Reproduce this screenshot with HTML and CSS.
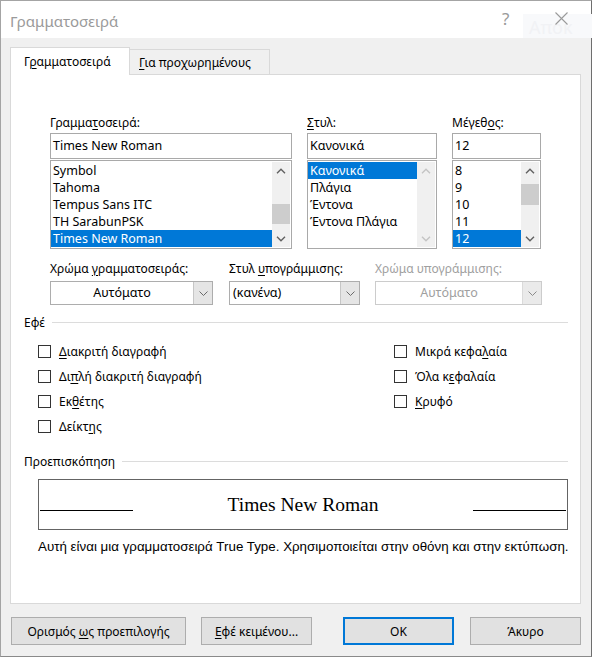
FILE: index.html
```html
<!DOCTYPE html>
<html lang="el">
<head>
<meta charset="utf-8">
<title>Γραμματοσειρά</title>
<link rel="stylesheet" href="styles.css">
</head>
<body>
<div class="window">
  <div class="titlebar">
    <span class="title">Γραμματοσειρά</span>
    <span class="spacer"></span>
    <span class="help">?</span>
    <span class="close"><svg width="13" height="13" viewBox="0 0 13 13"><path d="M0.5 0.5 L12.5 12.5 M12.5 0.5 L0.5 12.5" stroke="#9a9a9a" stroke-width="1.1" fill="none"/></svg></span>
    <div class="ghost">Απόκ</div>
  </div>
  <div class="content">
    <div class="tabs">
      <div class="tab active"><span>Γ<u>ρ</u>αμματοσειρά</span></div>
      <div class="tab"><span><u>Γ</u>ια προχωρημένους</span></div>
    </div>
    <div class="panel">
      <div class="fontrow">
        <div class="col col-font">
          <div class="lbl">Γραμμα<u>τ</u>οσειρά:</div>
          <div class="input">Times New Roman</div>
          <div class="list">
            <div class="items">
              <div class="item">Symbol</div>
              <div class="item">Tahoma</div>
              <div class="item">Tempus Sans ITC</div>
              <div class="item">TH SarabunPSK</div>
              <div class="item sel">Times New Roman</div>
            </div>
            <div class="sbar">
              <div class="arrow"><svg width="10" height="6" viewBox="0 0 10 6"><path d="M1 5.2 L5 1.2 L9 5.2" stroke="#606060" stroke-width="1.4" fill="none"/></svg></div>
              <div class="track"><div class="thumb" style="margin-top:25px;height:20px"></div></div>
              <div class="arrow"><svg width="10" height="6" viewBox="0 0 10 6"><path d="M1 0.8 L5 4.8 L9 0.8" stroke="#606060" stroke-width="1.4" fill="none"/></svg></div>
            </div>
          </div>
        </div>
        <div class="col col-style">
          <div class="lbl"><u>Σ</u>τυλ:</div>
          <div class="input">Κανονικά</div>
          <div class="list">
            <div class="items">
              <div class="item sel">Κανονικά</div>
              <div class="item">Πλάγια</div>
              <div class="item">Έντονα</div>
              <div class="item">Έντονα Πλάγια</div>
            </div>
            <div class="sbar disabled">
              <div class="arrow"><svg width="10" height="6" viewBox="0 0 10 6"><path d="M1 5.2 L5 1.2 L9 5.2" stroke="#c4c4c4" stroke-width="1.4" fill="none"/></svg></div>
              <div class="track"></div>
              <div class="arrow"><svg width="10" height="6" viewBox="0 0 10 6"><path d="M1 0.8 L5 4.8 L9 0.8" stroke="#c4c4c4" stroke-width="1.4" fill="none"/></svg></div>
            </div>
          </div>
        </div>
        <div class="col col-size">
          <div class="lbl">Μέγεθ<u>ο</u>ς:</div>
          <div class="input">12</div>
          <div class="list">
            <div class="items">
              <div class="item">8</div>
              <div class="item">9</div>
              <div class="item">10</div>
              <div class="item">11</div>
              <div class="item sel">12</div>
            </div>
            <div class="sbar">
              <div class="arrow"><svg width="10" height="6" viewBox="0 0 10 6"><path d="M1 5.2 L5 1.2 L9 5.2" stroke="#606060" stroke-width="1.4" fill="none"/></svg></div>
              <div class="track"><div class="thumb" style="margin-top:5px;height:21px"></div></div>
              <div class="arrow"><svg width="10" height="6" viewBox="0 0 10 6"><path d="M1 0.8 L5 4.8 L9 0.8" stroke="#606060" stroke-width="1.4" fill="none"/></svg></div>
            </div>
          </div>
        </div>
      </div>

      <div class="droprow">
        <div class="dcol dcol-1">
          <div class="lbl">Χρώμα <u>γ</u>ραμματοσειράς:</div>
          <div class="dd">
            <span class="ddtext center">Αυτόματο</span>
            <span class="ddbtn"><svg width="9" height="5" viewBox="0 0 9 5"><path d="M0.5 0.5 L4.5 4.5 L8.5 0.5" stroke="#6a6a6a" stroke-width="1" fill="none"/></svg></span>
          </div>
        </div>
        <div class="dcol dcol-2">
          <div class="lbl">Στυλ <u>υ</u>πογράμμισης:</div>
          <div class="dd">
            <span class="ddtext">(κανένα)</span>
            <span class="ddbtn"><svg width="9" height="5" viewBox="0 0 9 5"><path d="M0.5 0.5 L4.5 4.5 L8.5 0.5" stroke="#6a6a6a" stroke-width="1" fill="none"/></svg></span>
          </div>
        </div>
        <div class="dcol dcol-3">
          <div class="lbl dis">Χρώμα υπογράμμισης:</div>
          <div class="dd dd-dis">
            <span class="ddtext center">Αυτόματο</span>
            <span class="ddbtn"><svg width="9" height="5" viewBox="0 0 9 5"><path d="M0.5 0.5 L4.5 4.5 L8.5 0.5" stroke="#8a8a8a" stroke-width="1" fill="none"/></svg></span>
          </div>
        </div>
      </div>

      <div class="grouphead effects-head"><span>Εφέ</span><span class="rule"></span></div>
      <div class="checks">
        <div class="chk"><span class="box"></span><span><u>Δ</u>ιακριτή διαγραφή</span></div>
        <div class="chk"><span class="box"></span><span>Μικρά κεφα<u>λ</u>αία</span></div>
        <div class="chk"><span class="box"></span><span>Δι<u>π</u>λή διακριτή διαγραφή</span></div>
        <div class="chk"><span class="box"></span><span>Όλα κ<u>ε</u>φαλαία</span></div>
        <div class="chk"><span class="box"></span><span>Εκ<u>θ</u>έτης</span></div>
        <div class="chk"><span class="box"></span><span><u>Κ</u>ρυφό</span></div>
        <div class="chk"><span class="box"></span><span>Δείκτ<u>η</u>ς</span></div>
      </div>

      <div class="grouphead preview-head"><span>Προεπισκόπηση</span><span class="rule"></span></div>
      <div class="preview">
        <span class="pline"></span>
        <span class="ptext">Times New Roman</span>
        <span class="pline"></span>
      </div>
      <div class="desc">Αυτή είναι μια γραμματοσειρά True Type. Χρησιμοποιείται στην οθόνη και στην εκτύπωση.</div>
    </div>

    <div class="buttons">
      <div class="btn b1"><span>Ορισμός <u>ω</u>ς προεπιλογής</span></div>
      <div class="btn b2"><span><u>Ε</u>φέ κειμένου...</span></div>
      <div class="btn b3 default"><span>OK</span></div>
      <div class="btn b4"><span>Άκυρο</span></div>
    </div>
  </div>
</div>
</body>
</html>
```

FILE: styles.css
```css
* { box-sizing: border-box; }
html, body { margin: 0; padding: 0; }
body {
  width: 592px;
  height: 657px;
  background: #f0f0f0;
  font-family: "Noto Sans", "Open Sans", sans-serif;
  font-size: 12px;
  color: #000;
  overflow: hidden;
}
u { text-decoration: underline; text-underline-offset: 2px; text-decoration-thickness: 1px; }

.window {
  width: 592px;
  height: 657px;
  border: 1px solid #a4a4a4;
  border-right-color: #6e6e6e;
  border-bottom-color: #8a8a8a;
  background: #f0f0f0;
  display: flex;
  flex-direction: column;
}

/* title bar */
.titlebar {
  position: relative;
  height: 37px;
  background: #fff;
  display: flex;
  align-items: center;
  padding-left: 9px;
  flex: none;
}
.title { font-size: 15px; color: #9a9a9a; position: relative; top: 1px; }
.spacer { flex: 1; }
.help { font-size: 17px; color: #9a9a9a; width: 20px; margin-right: 33px; position: relative; top: -1px; z-index: 2; }
.close { width: 13px; height: 13px; margin-right: 23px; display: flex; position: relative; top: -1px; z-index: 2; }
.ghost {
  position: absolute;
  left: 522px;
  top: 13px;
  width: 69px;
  height: 24px;
  background: #f8f9fb;
  color: #f1f2f5;
  font-size: 18px;
  line-height: 26px;
  padding-left: 6px;
  z-index: 1;
}

/* content */
.content {
  flex: 1;
  padding: 9px 10px 0 9px;
  display: flex;
  flex-direction: column;
}
.tabs {
  height: 27px;
  display: flex;
  align-items: flex-end;
}
.tab {
  height: 25px;
  width: 141px;
  border: 1px solid #d9d9d9;
  border-bottom: none;
  background: #f0f0f0;
  margin-left: -1px;
  display: flex;
  align-items: center;
  padding-left: 9px;
  padding-top: 1px;
  white-space: nowrap;
}
.tab.active {
  height: 28px;
  width: 120px;
  margin-left: 0;
  margin-bottom: -1px;
  background: #fff;
  position: relative;
  z-index: 1;
  padding-left: 13px;
  padding-top: 0;
}

.panel {
  height: 530px;
  border: 1px solid #d9d9d9;
  background: #fff;
  padding-top: 40px;
  display: flex;
  flex-direction: column;
}

.lbl { height: 16px; line-height: 16px; white-space: nowrap; }
.lbl.dis { color: #a0a0a0; }

/* font row */
.fontrow {
  display: flex;
  gap: 15px;
  padding-left: 39px;
}
.col { display: flex; flex-direction: column; }
.col-font { width: 242px; }
.col-style { width: 130px; }
.col-size { width: 89px; }
.col .lbl { margin-bottom: 2px; }
.input {
  height: 26px;
  border: 1px solid #a9a9a9;
  font-size: 12.5px;
  line-height: 24px;
  padding-left: 2px;
  white-space: nowrap;
}
.list {
  margin-top: 1px;
  height: 89px;
  border: 1px solid #a9a9a9;
  padding: 1px 1px 1px 0;
  display: flex;
}
.items { flex: 1; min-width: 0; }
.item {
  height: 17px;
  line-height: 17px;
  font-size: 12.5px;
  padding-left: 2px;
  white-space: nowrap;
}
.item.sel { background: #0078d7; color: #fff; }
.sbar {
  width: 18px;
  background: #f0f0f0;
  display: flex;
  flex-direction: column;
}
.arrow {
  height: 17px;
  display: flex;
  align-items: center;
  justify-content: center;
}
.track { flex: 1; }
.thumb { background: #cdcdcd; width: 100%; }

/* dropdown row */
.droprow {
  display: flex;
  margin-top: 12px;
  padding-left: 39px;
}
.dcol { display: flex; flex-direction: column; }
.dcol .lbl { margin-bottom: 4px; }
.dcol-1 { width: 163px; }
.dcol-2 { width: 131px; margin-left: 16px; }
.dcol-3 { width: 167px; margin-left: 15px; }
.dd {
  height: 24px;
  border: 1px solid #adadad;
  display: flex;
  background: #fff;
}
.ddtext {
  flex: 1;
  font-size: 12.5px;
  line-height: 22px;
  padding-left: 3px;
  white-space: nowrap;
}
.ddtext.center { text-align: center; padding-left: 0; }
.ddbtn {
  width: 19px;
  background: #e5e5e5;
  border-left: 1px solid #c6c6c6;
  display: flex;
  align-items: center;
  justify-content: center;
}
.dd-dis { border-color: #cccccc; }
.dd-dis .ddtext { color: #a0a0a0; }
.dd-dis .ddbtn { background: #eaeaea; border-left-color: #dadada; }

/* group headers */
.grouphead {
  display: flex;
  align-items: center;
  padding-left: 13px;
  padding-right: 12px;
  height: 16px;
  line-height: 16px;
}
.grouphead .rule { flex: 1; height: 1px; background: #dcdcdc; margin-left: 7px; position: relative; top: -1px; }
.effects-head { margin-top: 10px; }
.preview-head { margin-top: 15px; }

.checks {
  margin-top: 8px;
  padding-left: 27px;
  display: grid;
  grid-template-columns: 356px 1fr;
  grid-auto-rows: 25px;
}
.chk { display: flex; align-items: center; gap: 8px; white-space: nowrap; }
.chk .box {
  width: 13px;
  height: 13px;
  border: 1px solid #333;
  background: #fff;
  flex: none;
}

/* preview */
.preview {
  margin-top: 9px;
  margin-left: 27px;
  width: 530px;
  height: 51px;
  border: 1px solid #646464;
  display: flex;
  align-items: center;
  padding: 0 1px;
}
.pline {
  width: 93px;
  height: 1px;
  background: #000;
  position: relative;
  top: 6px;
}
.ptext {
  flex: 1;
  text-align: center;
  font-family: "Liberation Serif", "Times New Roman", serif;
  font-size: 19.5px;
}
.desc {
  margin-top: 9px;
  padding-left: 27px;
  font-family: "Liberation Sans", Arial, sans-serif;
  font-size: 13.35px;
  line-height: 16px;
  white-space: nowrap;
}

/* buttons */
.buttons {
  margin-top: 13px;
  display: flex;
  padding-left: 1px;
}
.btn {
  height: 28px;
  border: 1px solid #adadad;
  background: #e1e1e1;
  display: flex;
  align-items: center;
  justify-content: center;
  white-space: nowrap;
}
.b1 { width: 175px; }
.b2 { width: 111px; margin-left: 15px; }
.b3 { width: 111px; margin-left: 31px; }
.b4 { width: 111px; margin-left: 16px; }
.btn.default { border: 2px solid #0078d7; }
```
